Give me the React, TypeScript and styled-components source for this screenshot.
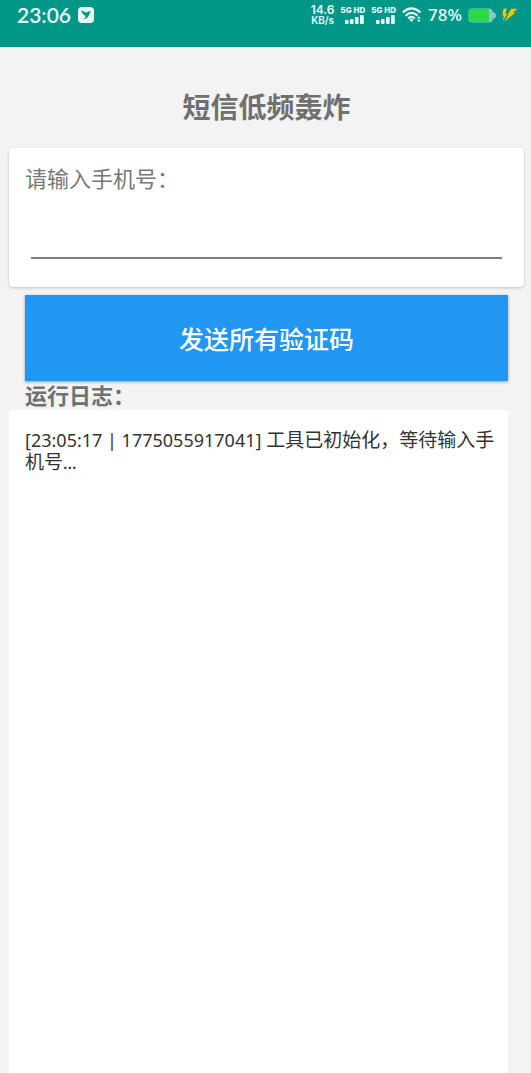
import React from "react";
import styled, { createGlobalStyle } from "styled-components";

const GlobalStyle = createGlobalStyle`
  * { box-sizing: border-box; }
  body {
    margin: 0;
    background: #f3f3f3;
    font-family: Lato, "Noto Sans CJK SC", sans-serif;
  }
`;

const Screen = styled.div`
  display: flex;
  flex-direction: column;
  min-height: 100vh;
`;

const StatusBar = styled.header`
  display: flex;
  justify-content: space-between;
  align-items: flex-start;
  height: 47px;
  padding: 0 13px 0 17px;
  background: #009688;
  color: #e9fbf8;
`;

const StatusGroup = styled.div<{ $gap: number }>`
  display: flex;
  align-items: center;
  gap: ${(p) => p.$gap}px;
  height: 30px;
`;

const Clock = styled.time`
  font-size: 21px;
  font-weight: 600;
  line-height: 30px;
`;

const NetSpeed = styled.div`
  display: flex;
  flex-direction: column;
  align-items: center;
  font-family: Inter, sans-serif;
  font-size: 12px;
  font-weight: 600;
  line-height: 10px;
`;

const SpeedUnit = styled.span`
  font-size: 10px;
`;

const SimSignal = styled.div`
  display: flex;
  flex-direction: column;
  align-items: flex-end;
  font-family: Inter, sans-serif;
  font-size: 8px;
  font-weight: 800;
  line-height: 9px;
  white-space: nowrap;
`;

const Battery = styled.span`
  font-family: "Noto Sans", sans-serif;
  font-size: 17px;
  font-weight: 500;
  line-height: 30px;
`;

const Main = styled.main`
  display: flex;
  flex: 1;
  flex-direction: column;
  padding: 39px 7px 0 9px;
`;

const Title = styled.h1`
  margin: 0 0 20px;
  color: #707070;
  font-size: 28px;
  font-weight: 700;
  line-height: 42px;
  text-align: center;
`;

const Card = styled.section`
  display: flex;
  flex-direction: column;
  height: 139px;
  padding: 15px 22px 0 16px;
  border-radius: 4px;
  background: #fff;
  box-shadow: 0 1px 3px rgba(0, 0, 0, 0.2);
`;

const PhoneLabel = styled.label`
  color: #777;
  font-size: 22px;
  line-height: 32px;
`;

const PhoneInput = styled.input`
  height: 64px;
  margin-left: 6px;
  padding: 0 4px;
  border: 0;
  border-bottom: 2px solid #7d7d7d;
  outline: 0;
  background: transparent;
  color: #333;
  font: inherit;
  font-size: 22px;
`;

const SendButton = styled.button`
  height: 86px;
  margin: 8px 16px 0 16px;
  border: 0;
  background: #2196f3;
  box-shadow: 0 1px 3px rgba(0, 0, 0, 0.35);
  color: #fff;
  font: inherit;
  font-size: 25px;
  font-weight: 500;
  cursor: pointer;
`;

const LogTitle = styled.h2`
  margin: 0;
  padding-left: 16px;
  color: #707070;
  font-size: 22px;
  font-weight: 700;
  line-height: 29px;
`;

const LogPanel = styled.section`
  flex: 1;
  margin-right: 16px;
  padding: 19px 8px 16px 16px;
  background: #fff;
`;

const LogLine = styled.p`
  margin: 0;
  color: #333;
  font-size: 19px;
  line-height: 22px;
`;

const LogStamp = styled.span`
  font-family: "Noto Sans", sans-serif;
  font-size: 18px;
`;

const AppBadge = () => (
  <svg width="16" height="16" viewBox="0 0 16 16" aria-hidden="true">
    <rect width="16" height="16" rx="4" fill="#e9fbf8" />
    <path d="M3 3.4 Q6 3.8 8 5.8 Q10 3.8 13.2 4.2 L11.8 6 Q11 11.2 5.2 12.4 Q7.4 11 7.6 9.2 Q4.2 7.4 3 3.4Z" fill="#009688" />
  </svg>
);

const Bars = () => (
  <svg width="20" height="9" viewBox="0 0 20 9" fill="currentColor" aria-hidden="true">
    <rect x="0" y="5" width="3.6" height="4" rx="1" />
    <rect x="5" y="4" width="3.6" height="5" rx="1" />
    <rect x="10" y="2" width="3.6" height="7" rx="1" />
    <rect x="15" y="0" width="3.8" height="9" rx="1" />
  </svg>
);

const Wifi = () => (
  <svg width="20" height="16" viewBox="0 0 20 16" fill="none" stroke="currentColor" strokeWidth="2.2" aria-hidden="true">
    <path d="M0.8 5.4 Q9.5 -2.6 18.4 5.4" />
    <path d="M3.6 8.6 Q9.5 3.2 15.6 8.6" />
    <path d="M6.2 11.4 Q9.5 8.4 12.8 11.4" />
    <path d="M7.4 12.6 Q9.5 11 11.6 12.6 L9.5 15Z" fill="currentColor" stroke="none" />
    <path d="M15 11.6 L16.8 9.2 L18.6 11.6Z M15 12.8 L16.8 15.2 L18.6 12.8Z" fill="currentColor" stroke="none" />
  </svg>
);

const BatteryIcon = () => (
  <svg width="28" height="15" viewBox="0 0 28 15" aria-hidden="true">
    <path d="M4 0.5 H21 Q24.4 0.5 25 4 Q28 5 28 7.5 Q28 10 25 11 Q24.4 14.5 21 14.5 H4 Q0.5 14.5 0.5 11 V4 Q0.5 0.5 4 0.5Z" fill="#80cbc4" />
    <path d="M4 1 H21 V14 H4 Q1 14 1 11 V4 Q1 1 4 1Z" fill="#2bd946" />
  </svg>
);

const Bolt = () => (
  <svg width="16" height="14" viewBox="0 0 16 14" fill="#ffc400" aria-hidden="true">
    <path d="M1.6 0.5 H4.8 L3.4 5.6 H5.4 L1 13 L1.8 7.6 H0.2Z" />
    <path d="M9 0.8 H15.8 L10.6 4.6 H13.4 L2.6 13.5 L5.6 7.8 L6.6 5.6Z" />
  </svg>
);

const sims = ["SIM 1", "SIM 2"];

export default function App() {
  return (
    <>
      <GlobalStyle />
      <Screen>
        <StatusBar>
          <StatusGroup $gap={7}>
            <Clock>23:06</Clock>
            <AppBadge />
          </StatusGroup>
          <StatusGroup $gap={6}>
            <NetSpeed>
              <span>14.6</span>
              <SpeedUnit>KB/s</SpeedUnit>
            </NetSpeed>
            {sims.map((sim) => (
              <SimSignal key={sim}>
                <span>5G HD</span>
                <Bars />
              </SimSignal>
            ))}
            <Wifi />
            <Battery>78%</Battery>
            <BatteryIcon />
            <Bolt />
          </StatusGroup>
        </StatusBar>
        <Main>
          <Title>短信低频轰炸</Title>
          <Card>
            <PhoneLabel htmlFor="phone">请输入手机号：</PhoneLabel>
            <PhoneInput id="phone" type="tel" />
          </Card>
          <SendButton type="button">发送所有验证码</SendButton>
          <LogTitle>运行日志：</LogTitle>
          <LogPanel>
            <LogLine>
              <LogStamp>[23:05:17 | 1775055917041]</LogStamp> 工具已初始化，等待输入手机号...
            </LogLine>
          </LogPanel>
        </Main>
      </Screen>
    </>
  );
}
